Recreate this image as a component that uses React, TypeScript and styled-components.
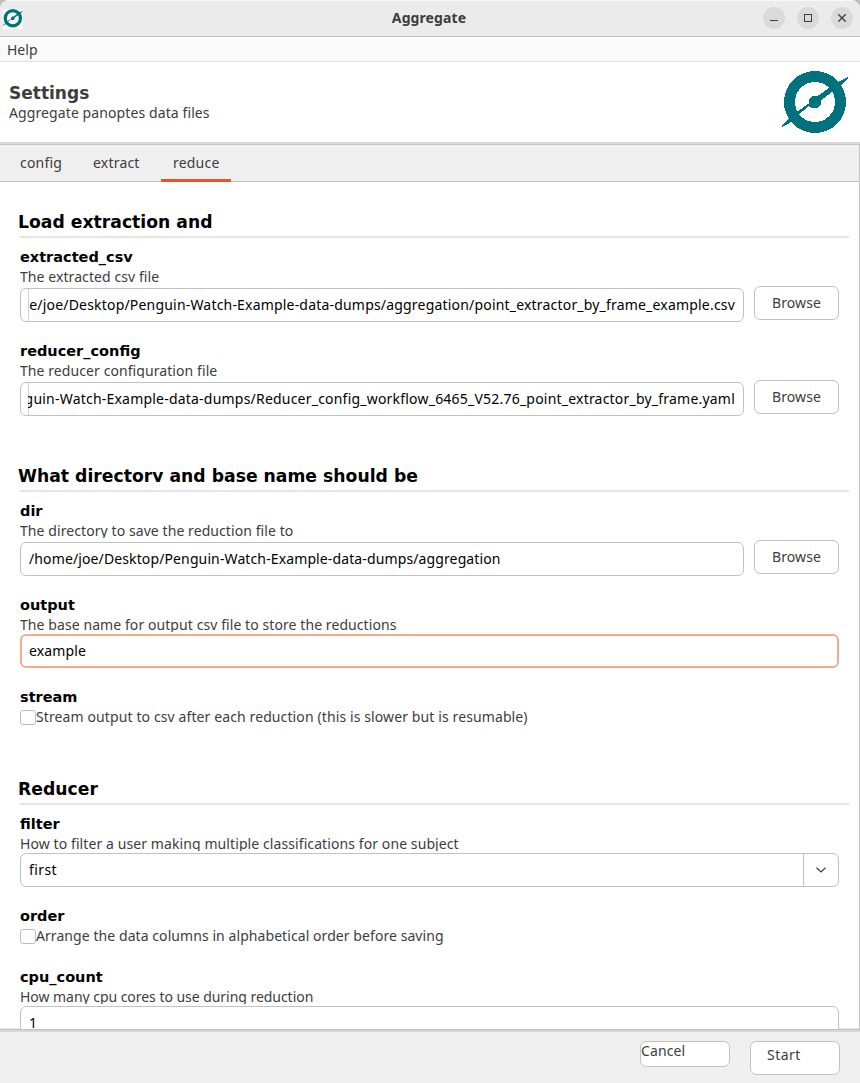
import React from "react";
import styled, { createGlobalStyle } from "styled-components";

const ink = "#3d3d3d";
const line = "#c2c2c2";
const brand = "#00727e";
const ui = `"Noto Sans", "Open Sans", sans-serif`;
const heading = `"DejaVu Sans", sans-serif`;

const GlobalStyle = createGlobalStyle`
  * { box-sizing: border-box; }
  body { margin: 0; background: #bdbdbd; }
`;

const Window = styled.div`
  display: flex;
  flex-direction: column;
  width: 860px;
  height: 1083px;
  overflow: hidden;
  border-radius: 9px 9px 0 0;
  background: #fff;
  color: ${ink};
  font: 14px/20px ${ui};
  letter-spacing: 0.1px;
  white-space: nowrap;
`;

const TitleBar = styled.header`
  display: grid;
  grid-template-columns: 1fr auto 1fr;
  align-items: center;
  flex: none;
  height: 37px;
  padding: 0 7px 0 3px;
  background: #ebebeb;
  border-top: 1px solid #f8f8f8;
  border-bottom: 1px solid #bebebe;
`;

const AppIcon = styled.span`
  display: flex;
  align-items: center;
  justify-content: center;
  width: 20px;
  height: 20px;
  background: #fff;
`;

const WindowTitle = styled.h1`
  margin: 0;
  padding: 0 0 2px 2px;
  font: bold 14px/20px ${ui};
`;

const WindowControls = styled.div`
  display: flex;
  justify-content: flex-end;
  gap: 12px;
  padding-bottom: 1px;
`;

const ControlButton = styled.button`
  display: flex;
  align-items: center;
  justify-content: center;
  width: 22px;
  height: 22px;
  padding: 0;
  border: 0;
  border-radius: 50%;
  background: #dadada;
  color: ${ink};
`;

const MenuBar = styled.nav`
  flex: none;
  height: 25px;
  padding: 3px 7px 0;
  background: #fafafa;
  border-bottom: 1px solid #dedede;
  letter-spacing: 0;
`;

const Banner = styled.section`
  display: flex;
  justify-content: space-between;
  flex: none;
  height: 82px;
  padding: 9px 11px 0 9px;
  border-bottom: 2px solid #d8d8d8;
`;

const BannerText = styled.div`
  padding-top: 12px;
`;

const BannerTitle = styled.h2`
  margin: 0;
  font: bold 17px/20px ${heading};
  letter-spacing: 0;
`;

const Panel = styled.main`
  display: flex;
  flex-direction: column;
  flex: none;
  height: 885px;
  border-top: 1px solid ${line};
  border-right: 1px solid ${line};
  box-shadow: inset 0 -1px #e4e4e4;
  overflow: hidden;
`;

const TabBar = styled.div`
  display: flex;
  flex: none;
  height: 37px;
  padding-left: 8px;
  background: #efefef;
  border-bottom: 1px solid ${line};
`;

const Tab = styled.button<{ $width: number; $active?: boolean }>`
  flex: none;
  width: ${(p) => p.$width}px;
  height: 37px;
  margin-right: 3px;
  padding: 2px 0 0 12px;
  border: 0;
  border-bottom: 3px solid ${(p) => (p.$active ? "#e95420" : "transparent")};
  background: none;
  color: inherit;
  font: inherit;
  letter-spacing: 0.2px;
  text-align: left;
`;

const Form = styled.form`
  padding: 28px 10px 0 20px;
`;

const Group = styled.section`
  & + & {
    margin-top: 48px;
  }
`;

const GroupTitle = styled.h3`
  height: 18px;
  margin: 0 0 8px -2px;
  overflow: hidden;
  color: #000;
  font: bold 17.2px/24px ${heading};
  letter-spacing: 0.02px;
`;

const Rule = styled.hr`
  height: 2px;
  margin: 0 0 9px;
  border: 0;
  background: #e5e5e5;
`;

const Field = styled.div`
  padding-right: 10px;

  & + & {
    margin-top: 19px;
  }
`;

const Label = styled.label`
  display: block;
  color: #000;
  font: bold 14.5px/20px ${heading};
  letter-spacing: 0;
`;

const Caption = styled.p<{ $gap?: number; $spacing?: number }>`
  height: 17px;
  margin: 0 0 ${(p) => p.$gap ?? 2}px;
  overflow: hidden;
  letter-spacing: ${(p) => p.$spacing ?? 0.08}px;
`;

const InputRow = styled.div`
  display: flex;
  gap: 10px;
`;

const TextBox = styled.div<{ $focused?: boolean }>`
  display: flex;
  flex: 1;
  min-width: 0;
  height: 34px;
  padding: ${(p) => (p.$focused ? "5px 6px 3px" : "6px 7px 4px")};
  border: ${(p) => (p.$focused ? "2px solid #f4aa90" : `1px solid ${line}`)};
  border-radius: 6px;
  background: #fff;
  color: #000;
`;

const Value = styled.span<{ $scrolled?: boolean; $spacing?: number }>`
  display: flex;
  flex: 1;
  justify-content: ${(p) => (p.$scrolled ? "flex-end" : "flex-start")};
  margin: ${(p) => (p.$scrolled ? "-6px 0 -4px" : "0")};
  padding: ${(p) => (p.$scrolled ? "6px 1px 4px 0" : "0 0 0 1px")};
  box-shadow: ${(p) => (p.$scrolled ? "inset 1px 0 #d0d0d0" : "none")};
  overflow: hidden;
  letter-spacing: ${(p) => p.$spacing ?? 0.12}px;
`;

const BrowseButton = styled.button`
  width: 85px;
  height: 34px;
  margin-top: -2px;
  padding: 0;
  border: 1px solid ${line};
  border-radius: 6px;
  background: #fff;
  color: inherit;
  font: inherit;
  letter-spacing: inherit;
`;

const CheckRow = styled.label<{ $spacing?: number }>`
  display: flex;
  height: 22px;
  letter-spacing: ${(p) => p.$spacing ?? 0.11}px;
`;

const CheckBox = styled.span`
  width: 16px;
  height: 15px;
  margin-top: 3px;
  border: 1px solid #bdbdbd;
  border-radius: 3px;
  background: #fff;
`;

const SelectArrow = styled.span`
  display: flex;
  align-items: center;
  justify-content: center;
  width: 35px;
  margin: -6px -7px -4px 0;
  border-left: 1px solid ${line};
`;

const Footer = styled.footer`
  display: flex;
  align-items: flex-start;
  justify-content: flex-end;
  gap: 20px;
  flex: 1;
  padding: 11px 20px 0;
  background: #efefef;
  border-top: 1px solid ${line};
  box-shadow: inset 0 2px #d8d8d8;
`;

const FooterButton = styled.button<{ $height: number; $pad: string; $spacing: number }>`
  display: flex;
  align-items: flex-start;
  width: 90px;
  height: ${(p) => p.$height}px;
  padding: ${(p) => p.$pad};
  border: 1px solid ${line};
  border-radius: 6px;
  background: #fff;
  color: inherit;
  font: inherit;
  letter-spacing: ${(p) => p.$spacing}px;
`;

const ButtonText = styled.span`
  margin-top: -1px;
`;

function Logo({ width, crisp }: { width: number; crisp?: boolean }) {
  return (
    <svg
      width={width}
      height={(width * 186) / 201}
      viewBox="36 33 201 186"
      fill={brand}
      shapeRendering={crisp ? "crispEdges" : "auto"}
    >
      <circle cx="135" cy="126" r="76.5" fill="none" stroke={brand} strokeWidth="33" />
      <path d="M235 50 L233 58 L214 75 L190 93 L153 121 L153 132 L143 144 L126 144 L116 139 L88 162 L57 190 L37 201 L36 196 L57 176 L80 156 L117 130 L117 119 L127 108 L143 108 L180 82 L214 61 Z" />
    </svg>
  );
}

interface FileFieldProps {
  name: string;
  caption: string;
  value: string;
  scrolled?: boolean;
  spacing?: number;
}

function FileField({ name, caption, value, scrolled, spacing }: FileFieldProps) {
  return (
    <Field>
      <Label>{name}</Label>
      <Caption $gap={4}>{caption}</Caption>
      <InputRow>
        <TextBox>
          <Value $scrolled={scrolled} $spacing={spacing}>{value}</Value>
        </TextBox>
        <BrowseButton type="button">Browse</BrowseButton>
      </InputRow>
    </Field>
  );
}

function CheckField({ name, caption, spacing }: { name: string; caption: string; spacing?: number }) {
  return (
    <Field>
      <Label>{name}</Label>
      <CheckRow $spacing={spacing}>
        <CheckBox />
        {caption}
      </CheckRow>
    </Field>
  );
}

export default function App() {
  return (
    <>
      <GlobalStyle />
      <Window>
        <TitleBar>
          <AppIcon>
            <Logo width={20} />
          </AppIcon>
          <WindowTitle>Aggregate</WindowTitle>
          <WindowControls>
            <ControlButton aria-label="Minimize">
              <svg width="8" height="8" viewBox="0 0 8 8" fill="currentColor">
                <rect x="0" y="6" width="8" height="1" />
              </svg>
            </ControlButton>
            <ControlButton aria-label="Maximize">
              <svg width="8" height="8" viewBox="0 0 8 8" fill="none" stroke="currentColor">
                <rect x="0.5" y="0.5" width="7" height="7" />
              </svg>
            </ControlButton>
            <ControlButton aria-label="Close">
              <svg width="8" height="8" viewBox="0 0 8 8" stroke="currentColor" strokeWidth="1.3">
                <path d="M0.3 0.3 L7.7 7.7 M7.7 0.3 L0.3 7.7" />
              </svg>
            </ControlButton>
          </WindowControls>
        </TitleBar>
        <MenuBar>Help</MenuBar>
        <Banner>
          <BannerText>
            <BannerTitle>Settings</BannerTitle>
            Aggregate panoptes data files
          </BannerText>
          <Logo width={67} crisp />
        </Banner>
        <Panel>
          <TabBar>
            <Tab $width={70}>config</Tab>
            <Tab $width={77}>extract</Tab>
            <Tab $width={70} $active>reduce</Tab>
          </TabBar>
          <Form>
            <Group>
              <GroupTitle>Load extraction and</GroupTitle>
              <Rule />
              <FileField
                name="extracted_csv"
                caption="The extracted csv file"
                value="e/joe/Desktop/Penguin-Watch-Example-data-dumps/aggregation/point_extractor_by_frame_example.csv"
                scrolled
                spacing={0.19}
              />
              <FileField
                name="reducer_config"
                caption="The reducer configuration file"
                value="guin-Watch-Example-data-dumps/Reducer_config_workflow_6465_V52.76_point_extractor_by_frame.yaml"
                scrolled
                spacing={0.21}
              />
            </Group>
            <Group>
              <GroupTitle>What directory and base name should be</GroupTitle>
              <Rule />
              <FileField
                name="dir"
                caption="The directory to save the reduction file to"
                value="/home/joe/Desktop/Penguin-Watch-Example-data-dumps/aggregation"
              />
              <Field>
                <Label>output</Label>
                <Caption>The base name for output csv file to store the reductions</Caption>
                <TextBox $focused>
                  <Value>example</Value>
                </TextBox>
              </Field>
              <CheckField
                name="stream"
                caption="Stream output to csv after each reduction (this is slower but is resumable)"
              />
            </Group>
            <Group>
              <GroupTitle>Reducer</GroupTitle>
              <Rule />
              <Field>
                <Label>filter</Label>
                <Caption $spacing={0.09}>How to filter a user making multiple classifications for one subject</Caption>
                <TextBox>
                  <Value $spacing={0.4}>first</Value>
                  <SelectArrow>
                    <svg width="10" height="6" viewBox="0 0 10 6" fill="none" stroke={ink} strokeWidth="1.2">
                      <path d="M0.5 0.7 L5 4.9 L9.5 0.7" />
                    </svg>
                  </SelectArrow>
                </TextBox>
              </Field>
              <CheckField
                name="order"
                caption="Arrange the data columns in alphabetical order before saving"
                spacing={0.07}
              />
              <Field>
                <Label>cpu_count</Label>
                <Caption $spacing={-0.04}>How many cpu cores to use during reduction</Caption>
                <TextBox>
                  <Value>1</Value>
                </TextBox>
              </Field>
            </Group>
          </Form>
        </Panel>
        <Footer>
          <FooterButton $height={26} $pad="0" $spacing={0.1}>
            <ButtonText>Cancel</ButtonText>
          </FooterButton>
          <FooterButton $height={34} $pad="4px 16px" $spacing={0.45}>
            <ButtonText>Start</ButtonText>
          </FooterButton>
        </Footer>
      </Window>
    </>
  );
}
